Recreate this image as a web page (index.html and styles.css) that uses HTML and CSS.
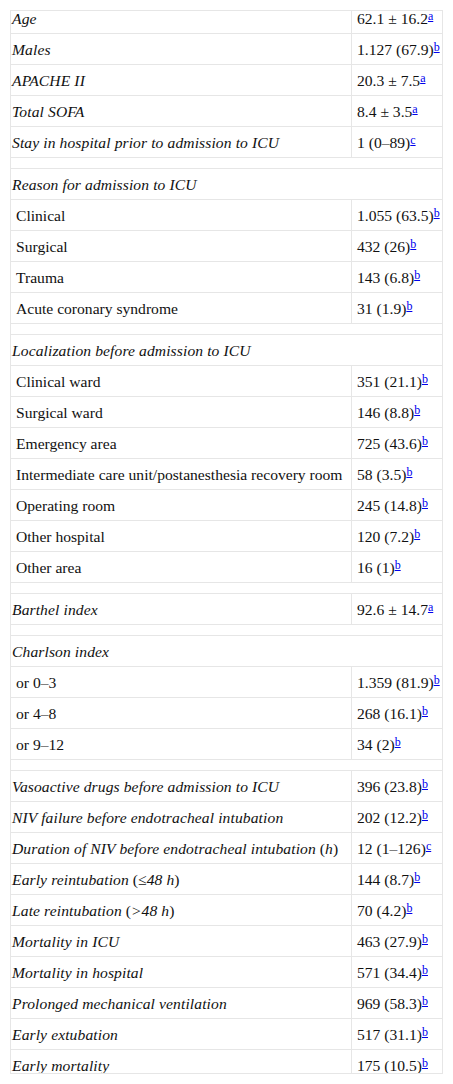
FILE: index.html
```html
<!DOCTYPE html>
<html>
<head>
<meta charset="utf-8">
<link rel="stylesheet" href="styles.css">
</head>
<body>
<div class="frame">
<table class="tbl">
<tbody>
<tr><td class="lbl"><i>Age</i></td><td class="val">62.1 ± 16.2<sup><a href="#a">a</a></sup></td></tr>
<tr><td class="lbl"><i>Males</i></td><td class="val">1.127 (67.9)<sup><a href="#b">b</a></sup></td></tr>
<tr><td class="lbl"><i>APACHE II</i></td><td class="val">20.3 ± 7.5<sup><a href="#a">a</a></sup></td></tr>
<tr><td class="lbl"><i>Total SOFA</i></td><td class="val">8.4 ± 3.5<sup><a href="#a">a</a></sup></td></tr>
<tr><td class="lbl"><i>Stay in hospital prior to admission to ICU</i></td><td class="val">1 (0–89)<sup><a href="#c">c</a></sup></td></tr>
<tr class="gap"><td colspan="2"></td></tr>
<tr><td class="lbl" colspan="2"><i>Reason for admission to ICU</i></td></tr>
<tr><td class="lbl sub">Clinical</td><td class="val">1.055 (63.5)<sup><a href="#b">b</a></sup></td></tr>
<tr><td class="lbl sub">Surgical</td><td class="val">432 (26)<sup><a href="#b">b</a></sup></td></tr>
<tr><td class="lbl sub">Trauma</td><td class="val">143 (6.8)<sup><a href="#b">b</a></sup></td></tr>
<tr><td class="lbl sub">Acute coronary syndrome</td><td class="val">31 (1.9)<sup><a href="#b">b</a></sup></td></tr>
<tr class="gap"><td colspan="2"></td></tr>
<tr><td class="lbl" colspan="2"><i>Localization before admission to ICU</i></td></tr>
<tr><td class="lbl sub">Clinical ward</td><td class="val">351 (21.1)<sup><a href="#b">b</a></sup></td></tr>
<tr><td class="lbl sub">Surgical ward</td><td class="val">146 (8.8)<sup><a href="#b">b</a></sup></td></tr>
<tr><td class="lbl sub">Emergency area</td><td class="val">725 (43.6)<sup><a href="#b">b</a></sup></td></tr>
<tr><td class="lbl sub">Intermediate care unit/postanesthesia recovery room</td><td class="val">58 (3.5)<sup><a href="#b">b</a></sup></td></tr>
<tr><td class="lbl sub">Operating room</td><td class="val">245 (14.8)<sup><a href="#b">b</a></sup></td></tr>
<tr><td class="lbl sub">Other hospital</td><td class="val">120 (7.2)<sup><a href="#b">b</a></sup></td></tr>
<tr><td class="lbl sub">Other area</td><td class="val">16 (1)<sup><a href="#b">b</a></sup></td></tr>
<tr class="gap"><td colspan="2"></td></tr>
<tr><td class="lbl"><i>Barthel index</i></td><td class="val">92.6 ± 14.7<sup><a href="#a">a</a></sup></td></tr>
<tr class="gap"><td colspan="2"></td></tr>
<tr><td class="lbl" colspan="2"><i>Charlson index</i></td></tr>
<tr><td class="lbl sub">or 0–3</td><td class="val">1.359 (81.9)<sup><a href="#b">b</a></sup></td></tr>
<tr><td class="lbl sub">or 4–8</td><td class="val">268 (16.1)<sup><a href="#b">b</a></sup></td></tr>
<tr><td class="lbl sub">or 9–12</td><td class="val">34 (2)<sup><a href="#b">b</a></sup></td></tr>
<tr class="gap"><td colspan="2"></td></tr>
<tr><td class="lbl"><i>Vasoactive drugs before admission to ICU</i></td><td class="val">396 (23.8)<sup><a href="#b">b</a></sup></td></tr>
<tr><td class="lbl"><i>NIV failure before endotracheal intubation</i></td><td class="val">202 (12.2)<sup><a href="#b">b</a></sup></td></tr>
<tr><td class="lbl"><i>Duration of NIV before endotracheal intubation</i> (<i>h</i>)</td><td class="val">12 (1–126)<sup><a href="#c">c</a></sup></td></tr>
<tr><td class="lbl"><i>Early reintubation</i> (<i>≤48 h</i>)</td><td class="val">144 (8.7)<sup><a href="#b">b</a></sup></td></tr>
<tr><td class="lbl"><i>Late reintubation</i> (<i>&gt;48 h</i>)</td><td class="val">70 (4.2)<sup><a href="#b">b</a></sup></td></tr>
<tr><td class="lbl"><i>Mortality in ICU</i></td><td class="val">463 (27.9)<sup><a href="#b">b</a></sup></td></tr>
<tr><td class="lbl"><i>Mortality in hospital</i></td><td class="val">571 (34.4)<sup><a href="#b">b</a></sup></td></tr>
<tr><td class="lbl"><i>Prolonged mechanical ventilation</i></td><td class="val">969 (58.3)<sup><a href="#b">b</a></sup></td></tr>
<tr><td class="lbl"><i>Early extubation</i></td><td class="val">517 (31.1)<sup><a href="#b">b</a></sup></td></tr>
<tr><td class="lbl"><i>Early mortality</i></td><td class="val">175 (10.5)<sup><a href="#b">b</a></sup></td></tr>
</tbody>
</table>
</div>
</body>
</html>
```

FILE: styles.css
```css
html, body {
  margin: 0;
  padding: 0;
  background: #ffffff;
}

body {
  font-family: "Liberation Serif", "Times New Roman", serif;
  font-size: 15.6px;
  color: #111111;
}

.frame {
  margin: 10px 0 0 10px;
  width: 431px;
  height: 1062px;
  border: 1px solid #e6e6e6;
  overflow: hidden;
}

.tbl {
  margin-top: -8px;
  width: 431px;
  border-collapse: collapse;
  table-layout: fixed;
}

.tbl td {
  height: 30px;
  padding: 0;
  border-bottom: 1px solid #e6e6e6;
  vertical-align: middle;
  white-space: nowrap;
  line-height: 17px;
}

.tbl td.lbl {
  width: 339px;
  padding-left: 1px;
  border-right: 1px solid #e6e6e6;
}

.tbl td.lbl i {
  letter-spacing: 0.1px;
}

.tbl td.lbl[colspan] {
  border-right: none;
}

.tbl td.sub {
  padding-left: 5px;
}

.tbl td.val {
  padding-left: 5px;
}

.tbl tr.gap td {
  height: 10px;
  padding: 0;
  line-height: 0;
}

sup {
  font-size: 12px;
  line-height: 0;
  vertical-align: 4px;
}

sup a {
  color: #0000ee;
  text-decoration: underline;
}
```
